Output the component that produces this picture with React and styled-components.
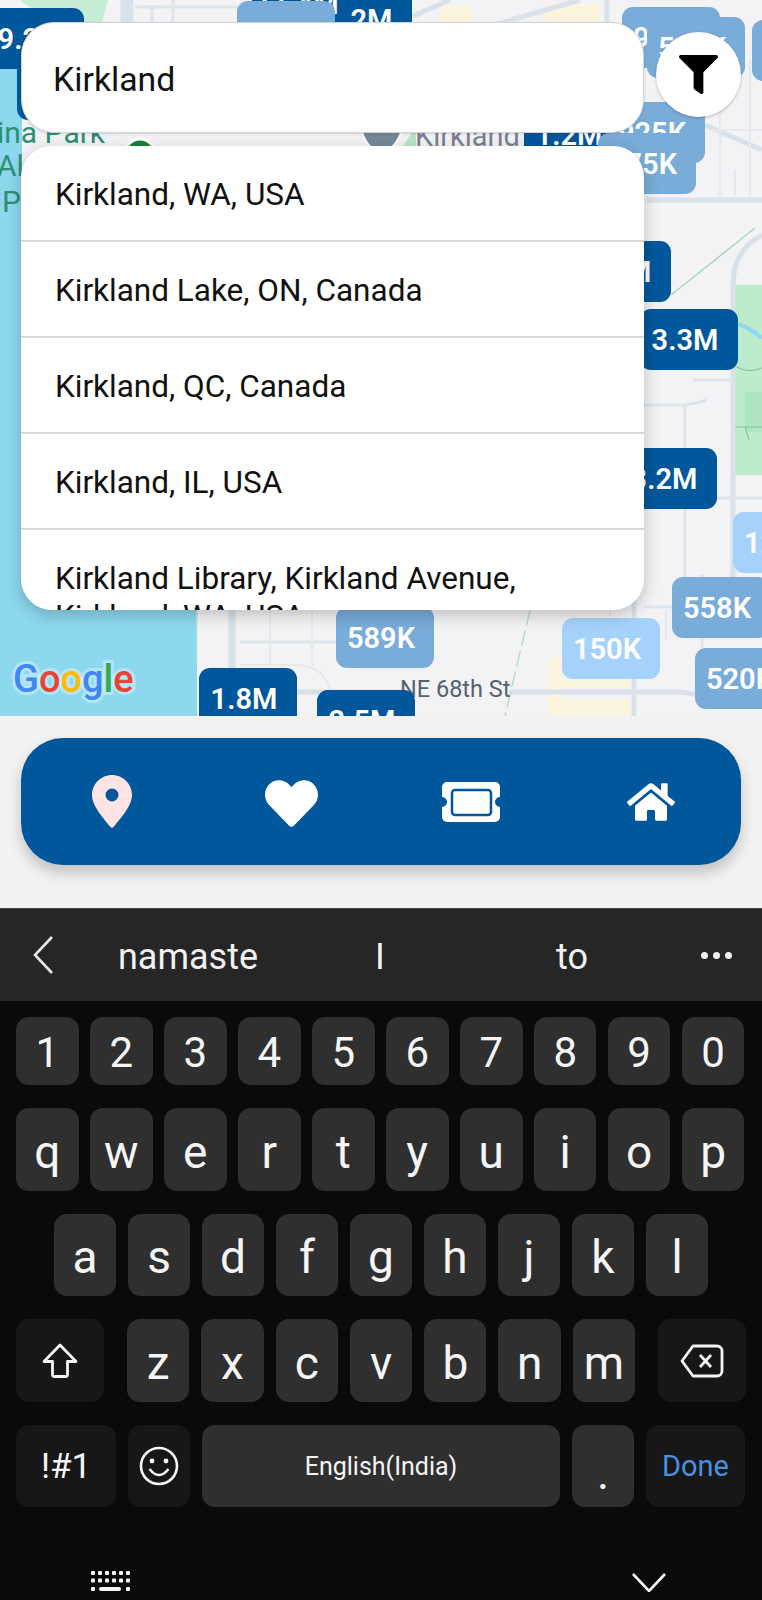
import React from 'react';
import styled, {createGlobalStyle} from 'styled-components';
import {FaFilter, FaHeart, FaHome} from 'react-icons/fa';

const GlobalStyle = createGlobalStyle`
    html, body {
        margin: 0;
        padding: 0;
        background: #f2f2f2;
        font-family: Roboto, "Liberation Sans", sans-serif;
    }
`;

const Screen = styled.div`
    width: 762px;
    height: 1600px;
    display: flex;
    flex-direction: column;
    overflow: hidden;
    background: #f2f2f2;
`;

const MapArea = styled.div`
    position: relative;
    height: 716px;
    flex: none;
    overflow: hidden;
    background: #f3f3f5;
`;

const MapDrawing = styled.svg`
    position: absolute;
    left: 0;
    top: 0;
`;

const PIN_COLORS = {dark: '#01579b', mid: '#7aacd9', light: '#a5d2fb'};

const Pin = styled.div`
    position: absolute;
    left: ${props => props.$x}px;
    top: ${props => props.$y}px;
    width: 98px;
    height: 61px;
    box-sizing: border-box;
    padding-right: 8px;
    display: flex;
    align-items: center;
    justify-content: center;
    border-radius: 11px;
    background: ${props => PIN_COLORS[props.$tone]};
    color: #fff;
    font-size: 29px;
    font-weight: 600;
`;

const MapLabel = styled.div`
    position: absolute;
    left: ${props => props.$x}px;
    top: ${props => props.$y}px;
    color: ${props => props.$color};
    font-size: ${props => props.$size}px;
    line-height: 1;
    white-space: nowrap;
`;

const GoogleLogo = styled.div`
    position: absolute;
    left: 13px;
    top: 658px;
    font-family: Roboto, sans-serif;
    font-size: 38px;
    font-weight: 500;
    line-height: 1.15;
    -webkit-text-stroke: 6px rgba(255, 255, 255, 0.35);
    paint-order: stroke fill;
`;

const LogoLetter = styled.span`
    color: ${props => props.$color};
`;

const SearchOverlay = styled.div`
    position: absolute;
    left: 21px;
    top: 22px;
    width: 720px;
`;

const SearchRow = styled.div`
    display: flex;
    align-items: flex-start;
    gap: 12px;
`;

const SearchInput = styled.input`
    width: 623px;
    height: 111px;
    box-sizing: border-box;
    padding: 4px 30px 0 31px;
    border: 1px solid #d4d4d4;
    border-radius: 33px;
    outline: none;
    background: #fff;
    box-shadow: 0 1px 3px rgba(0, 0, 0, 0.15);
    color: #111;
    font-family: Roboto, sans-serif;
    font-size: 33.8px;
`;

const FilterButton = styled.div`
    width: 85px;
    height: 85px;
    margin-top: 10px;
    display: flex;
    align-items: center;
    justify-content: center;
    border-radius: 50%;
    background: #fff;
    box-shadow: 0 1px 3px rgba(0, 0, 0, 0.25);
    color: #000;
`;

const Dropdown = styled.div`
    width: 623px;
    height: 464px;
    margin-top: 13px;
    overflow: hidden;
    border-radius: 31px;
    background: #fff;
    box-shadow: 0 5px 16px rgba(0, 0, 0, 0.22);
`;

const Suggestion = styled.div`
    padding: 30px 60px 26px 34px;
    border-bottom: 2px solid #d8d8d8;
    color: #111;
    font-size: 31.5px;
    line-height: 38px;
`;

const NavBar = styled.div`
    width: 720px;
    height: 127px;
    margin: 22px 0 43px 21px;
    flex: none;
    display: grid;
    grid-template-columns: repeat(4, 1fr);
    align-items: center;
    justify-items: center;
    border-radius: 42px;
    background: #01579b;
    box-shadow: 0 8px 14px rgba(0, 0, 0, 0.2);
    color: #fff;
`;

const NavIcon = styled.div`
    display: flex;
    padding: ${props => props.$pad || '0'};
`;

const Keyboard = styled.div`
    flex: 1;
    display: flex;
    flex-direction: column;
    background: #0a0a0a;
`;

const Toolbar = styled.div`
    height: 92px;
    flex: none;
    display: grid;
    grid-template-columns: 92px repeat(3, 192px) 1fr;
    align-items: center;
    border-top: 1px solid #4a4a4a;
    background: #262626;
    color: #f2f2f2;
`;

const BackCell = styled.div`
    display: flex;
    padding-left: 33px;
`;

const Word = styled.div`
    padding-top: 3px;
    text-align: center;
    font-size: 36px;
`;

const MoreDots = styled.div`
    display: flex;
    gap: 5px;
    padding-left: 33px;
`;

const MoreDot = styled.span`
    width: 7px;
    height: 7px;
    border-radius: 50%;
    background: #f2f2f2;
`;

const KeyRows = styled.div`
    display: flex;
    flex-direction: column;
    gap: 23px;
    padding: 16px 16px 0;
`;

const KeyRow = styled.div`
    height: ${props => props.$h}px;
    display: flex;
    gap: ${props => props.$gap || 12}px;
    padding-left: ${props => props.$indent || 0}px;
`;

const Key = styled.div`
    width: ${props => props.$w || 62.3}px;
    flex: none;
    box-sizing: border-box;
    padding-top: ${props => props.$top || 0}px;
    display: flex;
    align-items: center;
    justify-content: center;
    margin-left: ${props => props.$apart ? 11 : 0}px;
    border-radius: 13px;
    background: ${props => props.$special ? '#171717' : '#2f2f2f'};
    color: ${props => props.$color || '#f5f5f5'};
    font-size: ${props => props.$size || 46}px;
`;

const NavStrip = styled.div`
    display: flex;
    justify-content: space-between;
    align-items: center;
    margin-top: 64px;
    padding: 0 96px 0 91px;
`;

function Roads() {
    return (
        <MapDrawing width="762" height="716" viewBox="0 0 762 716">
            {/* water and parks */}
            <path d="M0 60 H22 V540 H197 V716 H0 Z" fill="#8cd8ef"/>
            <path d="M20 0 H108 L100 30 H60 Z" fill="#c5edd3"/>
            <path d="M735 285 H762 V475 H735 Z" fill="#bdeccd"/>
            <path d="M745 392 H762 V432 H745 Z" fill="#aee5c0"/>
            <path d="M738 324 Q750 328 762 338" stroke="#8cd8ef" strokeWidth="4" fill="none"/>
            <path d="M735 366 Q748 374 762 368 M735 427 H762 M745 427 L749 440" stroke="#7fbf98" strokeWidth="1" fill="none"/>
            {/* yellow blocks */}
            <path d="M440 6 H472 V24 H440 Z M545 4 H600 V24 H545 Z" fill="#fbf5e0"/>
            <path d="M549 657 H562 V716 H549 Z M562 680 H632 V688 H562 Z M562 700 H632 V716 H562 Z" fill="#fbf5e0"/>
            {/* main roads */}
            <g stroke="#d9e2ea" strokeWidth="5" fill="none">
                <path d="M232 606 V670" strokeWidth="7"/>
                <path d="M127 0 V24" strokeWidth="13"/>
                <path d="M607 0 V24"/>
                <path d="M413 16 L450 0 M497 24 L580 0"/>
                <path d="M705 125 L762 150"/>
                <path d="M647 200 H762"/>
                <path d="M762 235 Q733 250 733 285 V600"/>
                <path d="M296 692 H400 M510 692 H680 Q690 692 710 700"/>
                <path d="M634 600 V716"/>
            </g>
            <g stroke="#dde5eb" strokeWidth="3" fill="none">
                <path d="M135 7 H240 M173 0 V24 M152 5 V24"/>
                <path d="M240 642 H336"/>
                <path d="M685 405 V580 M643 405 H680 Q692 405 706 400"/>
                <path d="M693 380 H733"/>
                <path d="M717 498 H762"/>
                <path d="M644 607 H672"/>
                <path d="M702 575 V648"/>
            </g>
            <g stroke="#e8e8ec" strokeWidth="2" fill="none">
                <path d="M270 606 V665 M312 606 V665 M240 665 H300 Q325 668 330 690"/>
                <path d="M720 100 V196 M750 60 V196 M735 170 V196 M712 130 H762"/>
                <path d="M666 610 V640 M610 607 V616"/>
            </g>
            <path d="M530 610 L505 716" stroke="#b7dcc4" strokeWidth="1.5" strokeDasharray="16 5" fill="none"/>
            <path d="M671 295 L755 228" stroke="#a9d8bd" strokeWidth="1.5" fill="none"/>
            <path d="M197 606 V662" stroke="#c5edd3" strokeWidth="1.5" fill="none"/>
            {/* shield and poi marker showing in the gap between search and list */}
            <path d="M360 126 Q366 150 381 152 Q397 150 403 126 Z" fill="#76899a" stroke="#fff" strokeWidth="2"/>
            <path d="M403 146 L412 132 H416 V146 Z" fill="#b9e6c8"/>
            <circle cx="140" cy="154" r="15" fill="#188038" stroke="#fff" strokeWidth="3"/>
        </MapDrawing>
    );
}

// back to front, the later pins cover the earlier ones
const PINS = [
    {x: -14, y: 8, tone: 'dark', label: '9.2M'},
    {x: 17, y: 59, tone: 'dark', label: ''},
    {x: 314, y: -11, tone: 'dark', label: '1.2M'},
    {x: 252, y: -27, tone: 'dark', label: '11.4M'},
    {x: 237, y: 1, tone: 'mid', label: ''},
    {x: 752, y: 20, tone: 'mid', label: ''},
    {x: 622, y: 7, tone: 'mid', label: '950K'},
    {x: 647, y: 17, tone: 'mid', label: '565K'},
    {x: 524, y: 104, tone: 'dark', label: '1.2M'},
    {x: 607, y: 102, tone: 'mid', label: '925K'},
    {x: 598, y: 133, tone: 'mid', label: '675K'},
    {x: 573, y: 241, tone: 'dark', label: '1.1M'},
    {x: 640, y: 309, tone: 'dark', label: '3.3M'},
    {x: 619, y: 448, tone: 'dark', label: '3.2M'},
    {x: 733, y: 512, tone: 'light', label: '120K'},
    {x: 672, y: 577, tone: 'mid', label: '558K'},
    {x: 695, y: 648, tone: 'mid', label: '520K'},
    {x: 562, y: 618, tone: 'light', label: '150K'},
    {x: 336, y: 607, tone: 'mid', label: '589K'},
    {x: 199, y: 668, tone: 'dark', label: '1.8M'},
];

const SUGGESTIONS = [
    'Kirkland, WA, USA',
    'Kirkland Lake, ON, Canada',
    'Kirkland, QC, Canada',
    'Kirkland, IL, USA',
    'Kirkland Library, Kirkland Avenue, Kirkland, WA, USA',
];

const LocationIcon = () => (
    <svg width="40" height="53" viewBox="0 0 40 53">
        <path
            fillRule="evenodd"
            fill="#ffe4e6"
            d="M20 0C31 0 40 9 40 20C40 32 26 46 21.6 52A2 2 0 0 1 18.4 52C14 46 0 32 0 20C0 9 9 0 20 0ZM20 13.5A6.5 6.5 0 1 0 20 26.5A6.5 6.5 0 1 0 20 13.5Z"
        />
    </svg>
);

const TicketIcon = () => (
    <svg width="60" height="40" viewBox="0 0 60 40">
        <path
            fill="#fff"
            d="M6 0H54A5 5 0 0 1 59 5V15A5 5 0 0 0 59 25V35A5 5 0 0 1 54 40H6A5 5 0 0 1 1 35V25A5 5 0 0 0 1 15V5A5 5 0 0 1 6 0Z"
        />
        <rect x="11" y="8" width="39" height="25" rx="3" fill="#fff" stroke="#01579b" strokeWidth="2.5"/>
    </svg>
);

const BackIcon = () => (
    <svg width="20" height="38" viewBox="0 0 20 38">
        <path d="M19 1L2 19L19 37" stroke="#e8e8e8" strokeWidth="2.6" fill="none"/>
    </svg>
);

const ShiftIcon = () => (
    <svg width="36" height="36" viewBox="0 0 36 36">
        <path
            d="M18 2L34 18.5H25.5V31.5A2 2 0 0 1 23.5 33.5H12.5A2 2 0 0 1 10.5 31.5V18.5H2Z"
            stroke="#f5f5f5"
            strokeWidth="2.8"
            strokeLinejoin="round"
            fill="none"
        />
    </svg>
);

const BackspaceIcon = () => (
    <svg width="44" height="34" viewBox="0 0 44 34">
        <path
            d="M13 2H37A5 5 0 0 1 42 7V27A5 5 0 0 1 37 32H13L2 17Z"
            stroke="#f5f5f5"
            strokeWidth="2.8"
            strokeLinejoin="round"
            fill="none"
        />
        <path d="M20 11L31 23M31 11L20 23" stroke="#f5f5f5" strokeWidth="2.8" fill="none"/>
    </svg>
);

const EmojiIcon = () => (
    <svg width="40" height="40" viewBox="0 0 40 40">
        <circle cx="20" cy="20" r="18" stroke="#f5f5f5" strokeWidth="2.6" fill="none"/>
        <circle cx="13" cy="15" r="2.4" fill="#f5f5f5"/>
        <circle cx="27" cy="15" r="2.4" fill="#f5f5f5"/>
        <path d="M10.5 23Q20 35 29.5 23" stroke="#f5f5f5" strokeWidth="2.6" fill="none"/>
    </svg>
);

const KeyboardGlyph = () => (
    <svg width="39" height="22" viewBox="0 0 39 22" fill="#f5f5f5">
        {[0, 1].map(row => [0, 1, 2, 3, 4, 5].map(col => (
            <rect key={row + '-' + col} x={col * 7} y={row * 7.5} width="4" height="4" rx="1"/>
        )))}
        <rect x="0" y="16" width="4" height="4" rx="1"/>
        <rect x="8" y="16" width="22" height="4" rx="2"/>
        <rect x="35" y="16" width="4" height="4" rx="1"/>
    </svg>
);

const HideIcon = () => (
    <svg width="34" height="19" viewBox="0 0 34 19">
        <path d="M1 1L17 18L33 1" stroke="#f5f5f5" strokeWidth="2.6" fill="none"/>
    </svg>
);

export default function App() {
    return (
        <Screen>
            <GlobalStyle/>
            <MapArea>
                <Roads/>
                <MapLabel $x={-3} $y={118} $size={30} $color="#2f8f73">ina Park</MapLabel>
                <MapLabel $x={-3} $y={151} $size={30} $color="#2f8f73">Al</MapLabel>
                <MapLabel $x={2} $y={187} $size={30} $color="#2f8f73">P</MapLabel>
                <MapLabel $x={415} $y={122} $size={29} $color="#78838e">Kirkland</MapLabel>
                <MapLabel $x={400} $y={678} $size={23.5} $color="#55626e">NE 68th St</MapLabel>
                {PINS.map((pin, index) => (
                    <Pin key={index} $x={pin.x} $y={pin.y} $tone={pin.tone}>{pin.label}</Pin>
                ))}
                <Pin $x={317} $y={690} $tone="dark">2.5M</Pin>
                <GoogleLogo>
                    <LogoLetter $color="#4285f4">G</LogoLetter>
                    <LogoLetter $color="#ea4335">o</LogoLetter>
                    <LogoLetter $color="#fbbc05">o</LogoLetter>
                    <LogoLetter $color="#4285f4">g</LogoLetter>
                    <LogoLetter $color="#34a853">l</LogoLetter>
                    <LogoLetter $color="#ea4335">e</LogoLetter>
                </GoogleLogo>
                <SearchOverlay>
                    <SearchRow>
                        <SearchInput readOnly value="Kirkland"/>
                        <FilterButton><FaFilter size={39}/></FilterButton>
                    </SearchRow>
                    <Dropdown>
                        {SUGGESTIONS.map(text => <Suggestion key={text}>{text}</Suggestion>)}
                    </Dropdown>
                </SearchOverlay>
            </MapArea>

            <NavBar>
                <NavIcon $pad="0 0 0 2px"><LocationIcon/></NavIcon>
                <NavIcon $pad="3px 0 0"><FaHeart size={53}/></NavIcon>
                <NavIcon $pad="1px 0 0"><TicketIcon/></NavIcon>
                <NavIcon><FaHome size={48}/></NavIcon>
            </NavBar>

            <Keyboard>
                <Toolbar>
                    <BackCell><BackIcon/></BackCell>
                    <Word>namaste</Word>
                    <Word>I</Word>
                    <Word>to</Word>
                    <MoreDots><MoreDot/><MoreDot/><MoreDot/></MoreDots>
                </Toolbar>
                <KeyRows>
                    <KeyRow $h={68} $gap={11.4}>
                        {'1234567890'.split('').map(k => <Key key={k} $w={62.6} $size={42} $top={2}>{k}</Key>)}
                    </KeyRow>
                    <KeyRow $h={83} $gap={11.4}>
                        {'qwertyuiop'.split('').map(k => <Key key={k} $w={62.6} $top={4}>{k}</Key>)}
                    </KeyRow>
                    <KeyRow $h={82} $indent={38}>
                        {'asdfghjkl'.split('').map(k => <Key key={k} $w={62} $top={3}>{k}</Key>)}
                    </KeyRow>
                    <KeyRow $h={83}>
                        <Key $w={88} $special><ShiftIcon/></Key>
                        <Key $apart $top={4}>z</Key>
                        {'xcvbnm'.split('').map(k => <Key key={k} $top={4}>{k}</Key>)}
                        <Key $w={88} $special $apart><BackspaceIcon/></Key>
                    </KeyRow>
                    <KeyRow $h={82}>
                        <Key $w={100} $special $size={35}>!#1</Key>
                        <Key $w={62} $special><EmojiIcon/></Key>
                        <Key $w={358} $size={25}>English(India)</Key>
                        <Key $w={62} $top={14}>.</Key>
                        <Key $w={99} $special $size={29} $color="#4a8fe0">Done</Key>
                    </KeyRow>
                </KeyRows>
                <NavStrip>
                    <KeyboardGlyph/>
                    <HideIcon/>
                </NavStrip>
            </Keyboard>
        </Screen>
    );
}
